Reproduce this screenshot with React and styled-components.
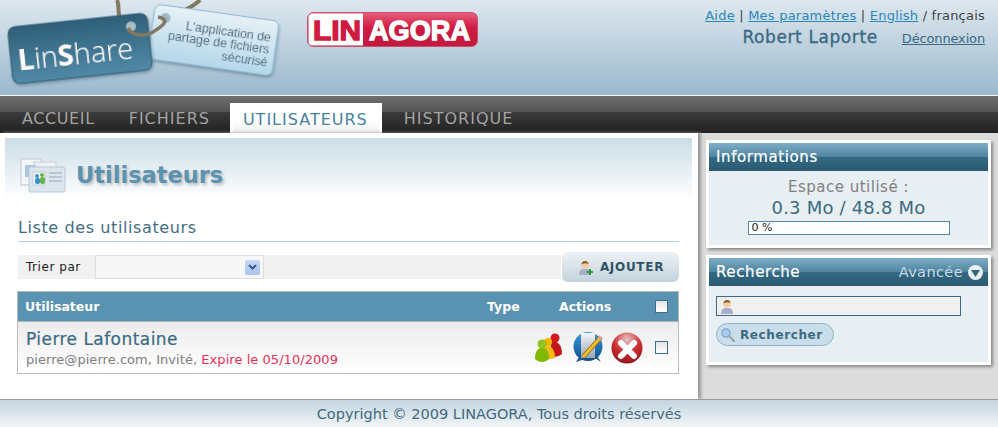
import React from "react";
import styled, { createGlobalStyle } from "styled-components";

const GlobalStyle = createGlobalStyle`
  html, body {
    margin: 0;
    padding: 0;
    background: #fff;
    font-family: "DejaVu Sans", Verdana, sans-serif;
  }
`;

const LinShareLogo = () => (
  <svg width="290" height="95" viewBox="0 0 290 95">
    <defs>
      <linearGradient id="tagDark" x1="0" y1="0" x2="0" y2="1">
        <stop offset="0" stopColor="#2f5f78" />
        <stop offset="1" stopColor="#5089a7" />
      </linearGradient>
      <linearGradient id="tagLight" x1="0" y1="0" x2="0" y2="1">
        <stop offset="0" stopColor="#e6f0f6" />
        <stop offset="1" stopColor="#b4d7ea" />
      </linearGradient>
      <filter id="tagShadow" x="-10%" y="-10%" width="120%" height="125%">
        <feDropShadow dx="1" dy="2" stdDeviation="1.5" floodColor="#3c5c70" floodOpacity="0.45" />
      </filter>
    </defs>
    <path d="M117 0 C120 6 117 12 120 18" fill="none" stroke="#84795f" strokeWidth="4" />
    <path d="M200 0 C194 6 188 9 178 13" fill="none" stroke="#84795f" strokeWidth="4" />
    <g transform="rotate(8 214 40)" filter="url(#tagShadow)">
      <rect x="151" y="12.5" width="125" height="55" rx="6" fill="url(#tagLight)" stroke="#8dbbd3" />
      <circle cx="163" cy="25" r="5" fill="#9fb9c9" />
      <g fontSize="12.4" fill="#4d6b7d" fontFamily="Liberation Sans, sans-serif" textAnchor="end">
        <text x="270" y="34">L'application de</text>
        <text x="270" y="46.5">partage de fichiers</text>
        <text x="270" y="59">sécurisé</text>
      </g>
    </g>
    <g transform="rotate(-6 80 48.5)" filter="url(#tagShadow)">
      <rect x="10" y="20" width="140" height="57" rx="7" fill="url(#tagDark)" stroke="#2d5a72" />
      <circle cx="133" cy="32" r="5" fill="#a8bcc8" />
      <text x="17" y="64" fontSize="29" fill="#fff" fontFamily="Open Sans, sans-serif" fontWeight="300">
        <tspan fontWeight="700">L</tspan>in<tspan fontWeight="700">S</tspan>hare
      </text>
    </g>
    <path d="M128 28 C132 36 146 38 156 30 C164 25 170 19 158 17" fill="none" stroke="#84795f" strokeWidth="3.5" />
  </svg>
);

const LinagoraLogo = () => (
  <svg width="171" height="36" viewBox="0 0 171 36">
    <defs>
      <linearGradient id="redBar" x1="0" y1="0" x2="0" y2="1">
        <stop offset="0" stopColor="#e8607c" />
        <stop offset="0.45" stopColor="#cf1b42" />
        <stop offset="1" stopColor="#c11a3e" />
      </linearGradient>
    </defs>
    <rect x="0.5" y="0.5" width="170" height="34" rx="6" fill="url(#redBar)" stroke="#c9516e" />
    <path d="M6 1.5 H56 V33.5 H6 Q1.5 33.5 1.5 29 V6 Q1.5 1.5 6 1.5 Z" fill="#fff" />
    <text x="6" y="28" fontSize="27" fontWeight="700" fill="#cf1b42" fontFamily="Liberation Sans, sans-serif" textLength="48" lengthAdjust="spacingAndGlyphs" stroke="#cf1b42" strokeWidth="1.3">LIN</text>
    <text x="62" y="28" fontSize="27" fontWeight="700" fill="#fff" fontFamily="Liberation Sans, sans-serif" textLength="101" lengthAdjust="spacingAndGlyphs" stroke="#fff" strokeWidth="1.3">AGORA</text>
  </svg>
);

const UsersPageIcon = () => (
  <svg width="46" height="36" viewBox="0 0 46 36">
    <rect x="1" y="2" width="20" height="26" fill="#f4f6f9" stroke="#bcc6d2" />
    <rect x="14" y="5" width="22" height="20" fill="#eef1f6" stroke="#c5ced9" />
    <rect x="5" y="8" width="11" height="12" fill="#aac8de" />
    <rect x="9" y="10" width="36" height="25" rx="2" fill="#dde5ee" stroke="#bcc7d4" />
    <rect x="13" y="15" width="12" height="13" fill="#f2f6fa" stroke="#c0ccd8" />
    <circle cx="17" cy="19" r="2" fill="#3c8fc7" />
    <rect x="15" y="21" width="5" height="6" rx="2" fill="#3c8fc7" />
    <circle cx="22" cy="18" r="2" fill="#69b544" />
    <rect x="20" y="20" width="5" height="7" rx="2" fill="#69b544" />
    <path d="M29 16 H42 M29 20 H42 M29 24 H42" stroke="#a9b9cc" strokeWidth="1.4" />
  </svg>
);

const PersonIcon = ({ plus }) => (
  <svg width="17" height="17" viewBox="0 0 17 17">
    <path d="M2 16 C2 11 4 10 8 10 C12 10 14 11 14 16 Z" fill="#a6aec8" />
    <circle cx="8" cy="6" r="3.6" fill="#f2c9a0" />
    <path d="M4.5 5.5 C4.5 1 11.5 1 11.5 5 C9.5 4 7 4 4.5 5.5 Z" fill="#8c5a20" />
    {plus && <path d="M13 10 V16 M10 13 H16" stroke="#2f9a3c" strokeWidth="2" />}
  </svg>
);

const SearchIcon = () => (
  <svg width="15" height="15" viewBox="0 0 15 15">
    <circle cx="6" cy="6" r="4.2" fill="#a9cdf0" stroke="#7fa3c6" strokeWidth="1.2" />
    <path d="M9.2 9.2 L14 14" stroke="#9aa4ac" strokeWidth="2.2" strokeLinecap="round" />
  </svg>
);

const ChevronCircle = () => (
  <svg width="15" height="15" viewBox="0 0 15 15">
    <circle cx="7.5" cy="7.5" r="7.5" fill="#e8f0f4" />
    <path d="M3 5 H12 L7.5 12 Z" fill="#33657e" />
  </svg>
);

const GroupIcon = () => (
  <svg width="28" height="30" viewBox="0 0 28 30">
    <circle cx="20" cy="5" r="4.5" fill="#d2191f" />
    <path d="M15 9 C21 7 27 10 27 21 C25 23 21 24 18 24 Z" fill="#c3171c" />
    <circle cx="13" cy="9" r="4" fill="#f4b400" />
    <path d="M8 13 C14 11 20 14 20 25 L10 27 Z" fill="#f3bc12" />
    <circle cx="7" cy="11" r="4.5" fill="#8fc31f" />
    <path d="M0 26 C0 18 3 15 7 15 C11 15 14 18 14 26 C10 30 4 30 0 26 Z" fill="#7fb800" />
  </svg>
);

const EditIcon = () => (
  <svg width="31" height="31" viewBox="0 0 31 31">
    <defs>
      <linearGradient id="editBlue" x1="0" y1="0" x2="0" y2="1">
        <stop offset="0" stopColor="#3b9ad8" />
        <stop offset="1" stopColor="#0d4f8c" />
      </linearGradient>
      <linearGradient id="editPage" x1="0" y1="0" x2="0" y2="1">
        <stop offset="0" stopColor="#f4f6f8" />
        <stop offset="1" stopColor="#9aa5b0" />
      </linearGradient>
    </defs>
    <circle cx="15" cy="14.5" r="14.5" fill="url(#editBlue)" />
    <path d="M8 1 H22 V26 H8 Z" fill="url(#editPage)" />
    <path d="M6 25 L3 30 L12 27 Z M22 26 L28 30 L24 24 Z" fill="#1a5c96" />
    <path d="M28 5 L10 25" stroke="#8a6a18" strokeWidth="4.6" />
    <path d="M28 5 L10 25" stroke="#f4bd2c" strokeWidth="3" />
    <path d="M28 5 L26 7" stroke="#e39a9a" strokeWidth="4" />
  </svg>
);

const DeleteIcon = () => (
  <svg width="32" height="32" viewBox="0 0 32 32">
    <defs>
      <radialGradient id="delRed" cx="0.5" cy="0.22" r="0.85">
        <stop offset="0" stopColor="#e8c6c6" />
        <stop offset="0.5" stopColor="#cc2f34" />
        <stop offset="1" stopColor="#8c1015" />
      </radialGradient>
    </defs>
    <circle cx="16" cy="16" r="15.5" fill="url(#delRed)" />
    <path d="M10 11 L23 24 M23 11 L10 24" stroke="#fff" strokeWidth="6" strokeLinecap="round" />
  </svg>
);

const Page = styled.div`
  width: 998px;
  height: 427px;
  overflow: hidden;
  display: flex;
  flex-direction: column;
`;

const Header = styled.header`
  height: 95px;
  flex: none;
  display: flex;
  background: linear-gradient(#dde7ef, #9bb9cd);
  border-bottom: 1px solid #f2f6f8;
`;

const LogoSlot = styled.div`
  width: 307px;
  flex: none;
`;

const PartnerSlot = styled.div`
  padding-top: 12px;
`;

const UserBox = styled.div`
  margin-left: auto;
  padding: 8px 13px 0 0;
  text-align: right;
`;

const TopLinks = styled.div`
  font-size: 13px;
  line-height: 16px;
  letter-spacing: 0.22px;
  color: #444;
`;

const TopLink = styled.a`
  color: #2b86bb;
  text-decoration: underline;
`;

const UserLine = styled.div`
  display: flex;
  justify-content: flex-end;
  align-items: baseline;
  margin-top: 3px;
`;

const UserName = styled.span`
  font-size: 17px;
  letter-spacing: 0.6px;
  -webkit-text-stroke: 0.35px #3b6a82;
  color: #3b6a82;
`;

const Logout = styled.a`
  font-size: 13px;
  letter-spacing: -0.15px;
  color: #3b6a82;
  text-decoration: underline;
  margin-left: 24px;
`;

const Nav = styled.nav`
  height: 37px;
  flex: none;
  display: flex;
  align-items: flex-end;
  padding-left: 4px;
  background: linear-gradient(#6f6d6d 0, #565555 44%, #3b3b3b 44%, #212121 100%);
`;

const Tab = styled.a`
  box-sizing: border-box;
  height: 30px;
  padding: 0 ${(p) => (p.$active ? "11px" : "18px")} 0 ${(p) => (p.$active ? "10px" : "18px")};
  margin: ${(p) => (p.$active ? "0 4px 0 2px" : "0")};
  display: flex;
  align-items: center;
  font-size: 16px;
  letter-spacing: 1px;
  color: ${(p) => (p.$active ? "#47829f" : "#a3a3a3")};
  background: ${(p) => (p.$active ? "linear-gradient(#fff 55%, #eee)" : "none")};
  border: ${(p) => (p.$active ? "3px solid #fff" : "none")};
  border-bottom: none;

  &:first-child {
    letter-spacing: 0.6px;
    padding-right: 16px;
  }
`;

const Body = styled.div`
  flex: 1;
  display: flex;
  background: #dcdcdc;
  min-height: 0;
`;

const Main = styled.main`
  box-sizing: border-box;
  width: 698px;
  flex: none;
  padding: 5px 6px 0 5px;
  background: #fff;
  box-shadow: 3px 0 3px #999;
`;

const Banner = styled.div`
  box-sizing: border-box;
  height: 62px;
  display: flex;
  align-items: center;
  gap: 10px;
  padding: 11px 0 0 15px;
  background: linear-gradient(#cbdde7, #fff);
`;

const PageTitle = styled.h1`
  margin: 0;
  font-size: 22.5px;
  font-weight: 700;
  color: #5a92b0;
  text-shadow: 2px 2px 3px #bbb;
`;

const Content = styled.div`
  padding: 18px 13px 0 13px;
`;

const SectionTitle = styled.h2`
  margin: 0;
  height: 23px;
  font-size: 16px;
  line-height: 20px;
  letter-spacing: 0.6px;
  font-weight: 400;
  color: #3f6d85;
  border-bottom: 1px solid #b8cfe0;
`;

const SortRow = styled.div`
  display: flex;
  align-items: center;
  height: 30px;
  margin-top: 10px;
`;

const SortBar = styled.div`
  flex: 1;
  height: 24px;
  display: flex;
  align-items: center;
  background: #f1f1f1;
`;

const SortLabel = styled.span`
  width: 77px;
  padding-left: 8px;
  box-sizing: border-box;
  font-size: 12px;
  letter-spacing: 0.55px;
  color: #222;
`;

const Select = styled.div`
  box-sizing: border-box;
  width: 169px;
  height: 24px;
  display: flex;
  align-items: center;
  justify-content: flex-end;
  padding-right: 3px;
  background: #f7f7f7;
  border: 1px solid #ddd;
`;

const SelectArrow = styled.div`
  width: 15px;
  height: 15px;
  display: flex;
  align-items: center;
  justify-content: center;
  border-radius: 2px;
  background: linear-gradient(#c8d8f5, #a9c2ef);
`;

const AddButton = styled.button`
  box-sizing: border-box;
  width: 117px;
  height: 30px;
  margin-left: 1px;
  padding: 0;
  border: none;
  border-radius: 6px;
  display: flex;
  align-items: center;
  justify-content: center;
  gap: 6px;
  font-family: inherit;
  font-size: 12px;
  font-weight: 600;
  letter-spacing: 0.7px;
  color: #2f5367;
  background: linear-gradient(#eef2f5, #c3d2dc);
`;

const Table = styled.div`
  margin-top: 9px;
  margin-left: -1px;
  border: 1px solid #bbb;
`;

const TableHead = styled.div`
  height: 29px;
  display: flex;
  align-items: center;
  background: #5a93b1;
  border-bottom: 1px solid #b5b5b5;
  color: #fff;
  font-size: 12.5px;
  font-weight: 600;
`;

const UserCol = styled.div`
  flex: 1;
  padding-left: 7px;
`;

const TypeCol = styled.div`
  width: 72px;
`;

const ActionsCol = styled.div`
  width: 96px;
`;

const Check = styled.span`
  box-sizing: border-box;
  width: 13px;
  height: 13px;
  margin-right: 10px;
  flex: none;
  border: 1px solid #3f6f90;
  background: linear-gradient(#e4e4e4, #fff);
`;

const TableRow = styled.div`
  height: 51px;
  display: flex;
  align-items: center;
  background: linear-gradient(#ececec, #fff);
`;

const UserInfo = styled.div`
  flex: 1;
  padding-left: 8px;
`;

const PersonName = styled.div`
  font-size: 17px;
  line-height: 20px;
  letter-spacing: 0.45px;
  -webkit-text-stroke: 0.2px #3b6a82;
  color: #3b6a82;
`;

const PersonMeta = styled.div`
  margin-top: 3px;
  font-size: 13px;
  line-height: 15px;
  letter-spacing: 0.05px;
  color: #808080;
`;

const Expiry = styled.span`
  color: #e8305a;
`;

const ActionIcons = styled.div`
  display: flex;
  align-items: center;
  gap: 9px;
  margin-right: 12px;
`;

const EditSlot = styled.span`
  display: flex;
  margin: 0 -2px 0 1px;
`;

const Side = styled.aside`
  flex: 1;
  padding: 7px 7px 0 8px;
  display: flex;
  flex-direction: column;
  gap: 7px;
`;

const Card = styled.section`
  border: 3px solid #fff;
  background: #e8eff3;
  box-shadow: 2px 2px 3px #888;
`;

const CardBar = styled.div`
  height: 28px;
  padding: 0 5px 0 7px;
  display: flex;
  align-items: center;
  justify-content: space-between;
  color: #fff;
  font-size: 15px;
  letter-spacing: 0.6px;
  -webkit-text-stroke: 0.2px #fff;
  background: linear-gradient(#7eaec6 0, #4f839f 50%, #336a84 50%, #2b5a72 100%);
`;

const Advanced = styled.span`
  display: flex;
  align-items: center;
  gap: 5px;
  font-size: 14.5px;
  letter-spacing: 0.4px;
  -webkit-text-stroke: 0;
  color: #c7dbe6;
`;

const InfoBody = styled.div`
  height: 74px;
  display: flex;
  flex-direction: column;
  align-items: center;
  padding-top: 8px;
  box-sizing: border-box;
`;

const SpaceLabel = styled.div`
  font-size: 15px;
  line-height: 17px;
  letter-spacing: 0.5px;
  color: #808080;
`;

const SpaceValue = styled.div`
  font-size: 18px;
  line-height: 20px;
  letter-spacing: 0.2px;
  margin-top: 2px;
  color: #3b6a82;
`;

const Progress = styled.div`
  box-sizing: border-box;
  width: 202px;
  height: 14px;
  margin-top: 3px;
  padding-left: 3px;
  font-size: 11px;
  line-height: 12px;
  color: #222;
  background: #fff;
  border: 1px solid #4f8cab;
`;

const SearchBody = styled.div`
  height: 66px;
  padding: 10px 7px 0 7px;
`;

const SearchField = styled.div`
  box-sizing: border-box;
  width: 245px;
  height: 20px;
  padding-left: 2px;
  display: flex;
  align-items: center;
  background: #f0f0f0;
  border: 1px solid #3b6a82;
`;

const SearchButton = styled.button`
  box-sizing: border-box;
  width: 118px;
  height: 23px;
  margin-top: 7px;
  padding: 0 0 0 3px;
  display: flex;
  align-items: center;
  gap: 5px;
  border: 1px solid #8fb3c8;
  border-radius: 12px;
  background: #c9deea;
  font-family: inherit;
  font-size: 12px;
  font-weight: 600;
  letter-spacing: 0.6px;
  color: #3b6a82;
`;

const Footer = styled.footer`
  flex: none;
  height: 27px;
  border-top: 1px solid #999;
  display: flex;
  align-items: center;
  justify-content: center;
  font-size: 14.5px;
  color: #3f6a80;
  background: linear-gradient(#c3d4e0, #f2f5f7);
`;

const App = () => {
  return (
    <Page>
      <GlobalStyle />
      <Header>
        <LogoSlot>
          <LinShareLogo />
        </LogoSlot>
        <PartnerSlot>
          <LinagoraLogo />
        </PartnerSlot>
        <UserBox>
          <TopLinks>
            <TopLink>Aide</TopLink> | <TopLink>Mes paramètres</TopLink> | <TopLink>English</TopLink> / français
          </TopLinks>
          <UserLine>
            <UserName>Robert Laporte</UserName>
            <Logout>Déconnexion</Logout>
          </UserLine>
        </UserBox>
      </Header>

      <Nav>
        <Tab>ACCUEIL</Tab>
        <Tab>FICHIERS</Tab>
        <Tab $active>UTILISATEURS</Tab>
        <Tab>HISTORIQUE</Tab>
      </Nav>

      <Body>
        <Main>
          <Banner>
            <UsersPageIcon />
            <PageTitle>Utilisateurs</PageTitle>
          </Banner>
          <Content>
            <SectionTitle>Liste des utilisateurs</SectionTitle>
            <SortRow>
              <SortBar>
                <SortLabel>Trier par</SortLabel>
                <Select>
                  <SelectArrow>
                    <svg width="9" height="6" viewBox="0 0 9 6">
                      <path d="M1 1 L4.5 4.5 L8 1" fill="none" stroke="#3b5a80" strokeWidth="2" />
                    </svg>
                  </SelectArrow>
                </Select>
              </SortBar>
              <AddButton>
                <PersonIcon plus />
                AJOUTER
              </AddButton>
            </SortRow>
            <Table>
              <TableHead>
                <UserCol>Utilisateur</UserCol>
                <TypeCol>Type</TypeCol>
                <ActionsCol>Actions</ActionsCol>
                <Check />
              </TableHead>
              <TableRow>
                <UserInfo>
                  <PersonName>Pierre Lafontaine</PersonName>
                  <PersonMeta>
                    pierre@pierre.com, Invité, <Expiry>Expire le 05/10/2009</Expiry>
                  </PersonMeta>
                </UserInfo>
                <ActionIcons>
                  <GroupIcon />
                  <EditSlot>
                    <EditIcon />
                  </EditSlot>
                  <DeleteIcon />
                </ActionIcons>
                <Check />
              </TableRow>
            </Table>
          </Content>
        </Main>

        <Side>
          <Card>
            <CardBar>Informations</CardBar>
            <InfoBody>
              <SpaceLabel>Espace utilisé :</SpaceLabel>
              <SpaceValue>0.3 Mo / 48.8 Mo</SpaceValue>
              <Progress>0 %</Progress>
            </InfoBody>
          </Card>
          <Card>
            <CardBar>
              Recherche
              <Advanced>
                Avancée <ChevronCircle />
              </Advanced>
            </CardBar>
            <SearchBody>
              <SearchField>
                <PersonIcon />
              </SearchField>
              <SearchButton>
                <SearchIcon />
                Rechercher
              </SearchButton>
            </SearchBody>
          </Card>
        </Side>
      </Body>

      <Footer>Copyright © 2009 LINAGORA, Tous droits réservés</Footer>
    </Page>
  );
};

export default App;
